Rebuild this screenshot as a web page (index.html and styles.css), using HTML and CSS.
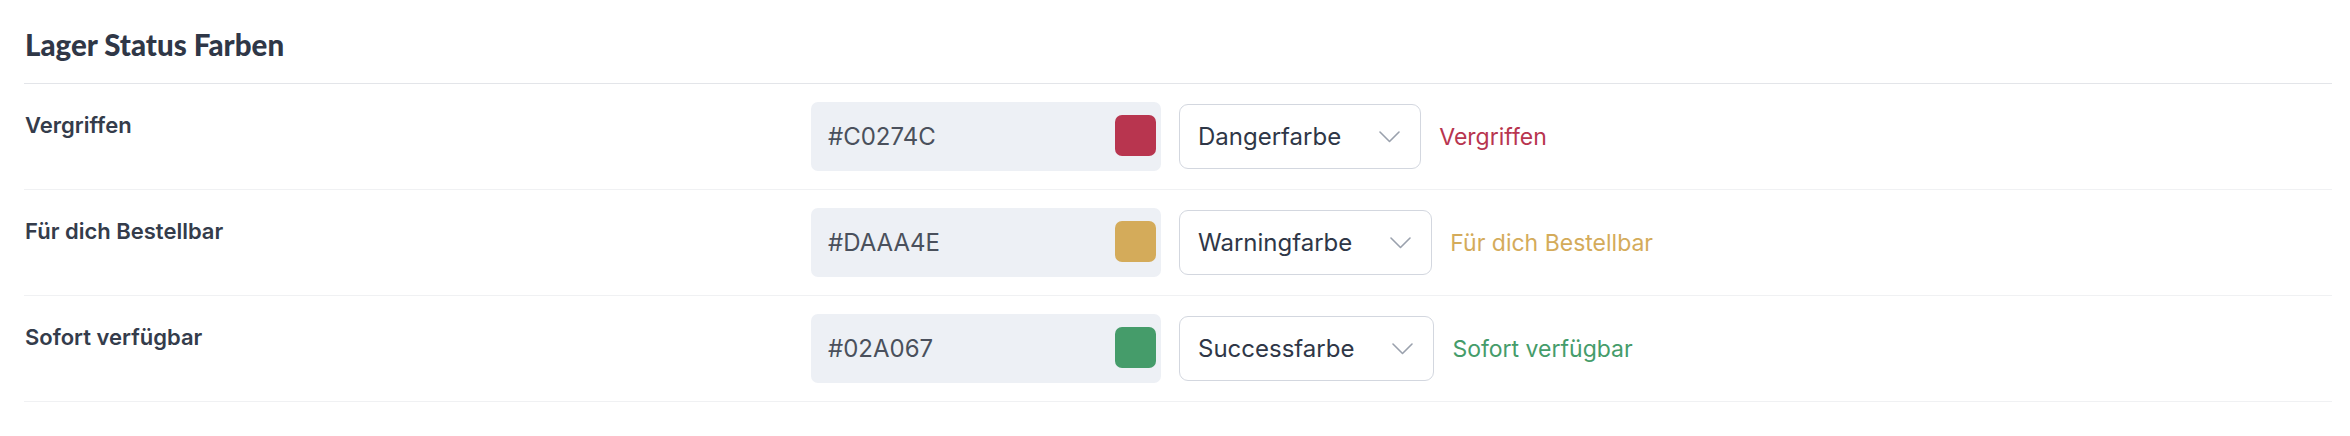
FILE: index.html
```html
<!DOCTYPE html>
<html lang="de">
<head>
<meta charset="utf-8">
<title>Lager Status Farben</title>
<link rel="stylesheet" href="styles.css">
</head>
<body>
<section class="panel">
  <h2 class="panel-title">Lager Status Farben</h2>

  <div class="row">
    <div class="row-label">Vergriffen</div>
    <div class="row-controls">
      <div class="color-field">
        <span class="color-value">#C0274C</span>
        <span class="swatch swatch-danger"></span>
      </div>
      <div class="select">
        <span class="select-text">Dangerfarbe</span>
        <svg class="chevron" width="21" height="12" viewBox="0 0 21 12"><path d="M1 1 L10.5 10.5 L20 1" fill="none" stroke="#9aa1ad" stroke-width="1.6" stroke-linecap="round" stroke-linejoin="round"/></svg>
      </div>
      <span class="preview preview-danger">Vergriffen</span>
    </div>
  </div>

  <div class="row">
    <div class="row-label">Für dich Bestellbar</div>
    <div class="row-controls">
      <div class="color-field">
        <span class="color-value">#DAAA4E</span>
        <span class="swatch swatch-warning"></span>
      </div>
      <div class="select">
        <span class="select-text">Warningfarbe</span>
        <svg class="chevron" width="21" height="12" viewBox="0 0 21 12"><path d="M1 1 L10.5 10.5 L20 1" fill="none" stroke="#9aa1ad" stroke-width="1.6" stroke-linecap="round" stroke-linejoin="round"/></svg>
      </div>
      <span class="preview preview-warning">Für dich Bestellbar</span>
    </div>
  </div>

  <div class="row">
    <div class="row-label">Sofort verfügbar</div>
    <div class="row-controls">
      <div class="color-field">
        <span class="color-value">#02A067</span>
        <span class="swatch swatch-success"></span>
      </div>
      <div class="select">
        <span class="select-text">Successfarbe</span>
        <svg class="chevron" width="21" height="12" viewBox="0 0 21 12"><path d="M1 1 L10.5 10.5 L20 1" fill="none" stroke="#9aa1ad" stroke-width="1.6" stroke-linecap="round" stroke-linejoin="round"/></svg>
      </div>
      <span class="preview preview-success">Sofort verfügbar</span>
    </div>
  </div>
</section>
</body>
</html>
```

FILE: styles.css
```css
* { box-sizing: border-box; }

html, body {
  margin: 0;
  background: #ffffff;
}

body {
  font-family: Inter, "Noto Sans", sans-serif;
  color: #2f3747;
}

.panel {
  padding: 0 18px 0 24px;
}

.panel-title {
  margin: 0;
  padding: 25px 0 18px 1px;
  height: 84px;
  line-height: 40px;
  font-family: Lato, "Open Sans", sans-serif;
  font-weight: 900;
  font-size: 29.5px;
  color: #2f3747;
  border-bottom: 1px solid #e3e5e9;
}

.row {
  display: flex;
  align-items: flex-start;
  padding: 18px 0;
  border-bottom: 1px solid #f0f1f3;
}

.row-label {
  width: 787px;
  flex: none;
  padding: 7px 0 0 1px;
  font-size: 22px;
  line-height: 33px;
  font-weight: 600;
  color: #343c4b;
}

.row-controls {
  display: flex;
  align-items: center;
  gap: 18px;
  height: 69px;
}

.color-field {
  width: 350px;
  height: 69px;
  display: flex;
  align-items: center;
  justify-content: space-between;
  padding: 0 5px 0 17px;
  background: #edf0f5;
  border-radius: 7px;
}

.color-value {
  font-size: 24px;
  color: #4a505c;
}

.swatch {
  width: 41px;
  height: 41px;
  border-radius: 7px;
  margin-top: -3px;
}

.swatch-danger { background: #b8354f; }
.swatch-warning { background: #d4ab5a; }
.swatch-success { background: #459c6a; }

.select {
  height: 65px;
  display: flex;
  align-items: center;
  gap: 38px;
  padding: 0 20px 0 18px;
  background: #ffffff;
  border: 1px solid #d3d7df;
  border-radius: 9px;
}

.select-text {
  font-size: 24px;
  color: #2f3747;
}

.chevron {
  display: block;
  flex: none;
}

.preview {
  font-size: 23px;
}

.preview-danger { color: #b8354f; }
.preview-warning { color: #d4ab5a; }
.preview-success { color: #459c6a; }
```
